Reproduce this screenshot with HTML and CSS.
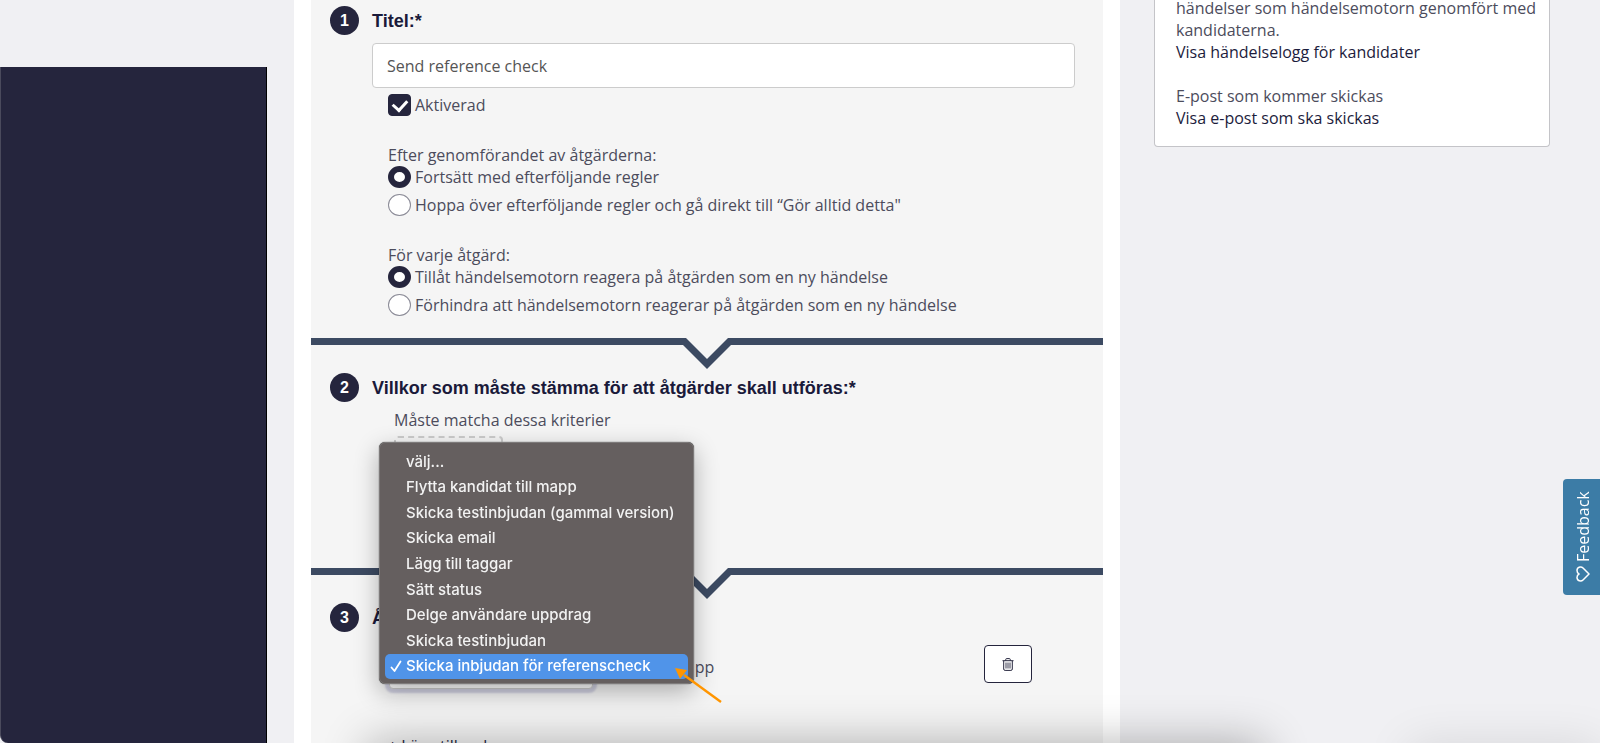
FILE: index.html
```html
<!DOCTYPE html>
<html lang="sv">
<head>
  <meta charset="utf-8">
  <title>Händelsemotor - Redigera regel</title>
  <meta name="viewport" content="width=device-width, initial-scale=1.0">
  <link rel="stylesheet" href="styles.css">
</head>
<body>
  <div class="page">
    <div class="sidebar"></div>

    <main class="main">
      <form class="rule">
        <section class="step step-first">
          <div class="step-header">
            <span class="step-number">1</span>
            <label class="step-title" for="title">Titel:*</label>
          </div>
          <input class="title-input" type="text" id="title" name="title" value="Send reference check">

          <div class="options">
            <label class="option"><input type="checkbox" name="active" checked> Aktiverad</label>
          </div>

          <div class="options" role="radiogroup" aria-labelledby="after-label">
            <div id="after-label">Efter genomförandet av åtgärderna:</div>
            <label class="option"><input type="radio" name="after" checked> Fortsätt med efterföljande regler</label>
            <label class="option"><input type="radio" name="after"> Hoppa över efterföljande regler och gå direkt till “Gör alltid detta"</label>
          </div>

          <div class="options" role="radiogroup" aria-labelledby="each-label">
            <div id="each-label">För varje åtgärd:</div>
            <label class="option"><input type="radio" name="each" checked> Tillåt händelsemotorn reagera på åtgärden som en ny händelse</label>
            <label class="option"><input type="radio" name="each"> Förhindra att händelsemotorn reagerar på åtgärden som en ny händelse</label>
          </div>
        </section>

        <div class="divider">
          <svg width="48" height="31" viewBox="0 0 48 31"><path d="M0 0H3L24 21L45 0H48V7L24 31L0 7Z" fill="#3c4a62"/></svg>
        </div>

        <section class="step step-conditions">
          <div class="step-header">
            <span class="step-number">2</span>
            <h2 class="step-title">Villkor som måste stämma för att åtgärder skall utföras:*</h2>
          </div>
          <div class="criteria">
            <div>Måste matcha dessa kriterier</div>
            <div class="criteria-box"></div>
          </div>
        </section>

        <div class="divider">
          <svg width="48" height="31" viewBox="0 0 48 31"><path d="M0 0H3L24 21L45 0H48V7L24 31L0 7Z" fill="#3c4a62"/></svg>
        </div>

        <section class="step">
          <div class="step-header">
            <span class="step-number">3</span>
            <h2 class="step-title">Åtgärder:*</h2>
          </div>
          <div class="action-row">
            <div class="action-field">
              <select class="action-select" name="action" aria-label="Åtgärd">
                <option></option>
              </select>

              <ul class="menu" role="listbox">
                <li class="menu-item" role="option">välj...</li>
                <li class="menu-item" role="option">Flytta kandidat till mapp</li>
                <li class="menu-item" role="option">Skicka testinbjudan (gammal version)</li>
                <li class="menu-item" role="option">Skicka email</li>
                <li class="menu-item" role="option">Lägg till taggar</li>
                <li class="menu-item" role="option">Sätt status</li>
                <li class="menu-item" role="option">Delge användare uppdrag</li>
                <li class="menu-item" role="option">Skicka testinbjudan</li>
                <li class="menu-item selected" role="option" aria-selected="true">
                  <svg class="check" width="12" height="13" viewBox="0 0 12 13"><path d="M1.500 7.500L4.500 11L10.500 1.500" fill="none" stroke="#fff" stroke-width="1.800" stroke-linecap="round" stroke-linejoin="round"/></svg>
                  Skicka inbjudan för referenscheck
                </li>
              </ul>

              <svg class="arrow" width="48" height="36" viewBox="0 0 48 36">
                <path d="M9 7L46 34" stroke="#ff9500" stroke-width="2.400"/>
                <path d="M0 0L12 2L5 11Z" fill="#ff9500"/>
              </svg>
            </div>
            <div class="action-target">mapp</div>
            <button class="delete-btn" type="button" aria-label="Ta bort">
              <svg width="12" height="13" viewBox="0 0 12 13" fill="none" stroke="#25253d">
                <path d="M0.500 2.700H11.500M3.700 2.500V1.600Q3.700 0.600 4.700 0.600H7.300Q8.300 0.600 8.300 1.600V2.500M1.700 3V11Q1.700 12.400 3.100 12.400H8.900Q10.300 12.400 10.300 11V3"/>
                <path d="M4 4.500V10.500M6 4.500V10.500M8 4.500V10.500" stroke-width="0.900"/>
              </svg>
            </button>
          </div>
          <button class="add-btn" type="button">+ Lägg till rad</button>
        </section>
      </form>
    </main>

    <aside class="info">
      <div class="info-card">
        <p>händelser som händelsemotorn genomfört med kandidaterna.<br>
        <a href="#">Visa händelselogg för kandidater</a></p>
        <p>E-post som kommer skickas<br>
        <a href="#">Visa e-post som ska skickas</a></p>
      </div>
    </aside>
  </div>

  <button class="feedback" type="button">
    <svg width="14" height="16" viewBox="0 0 14 16"><path d="M1 8L7 2C9 0 13 1 13 4.500C13 6.500 12 7.500 11 8C12 8.500 13 9.500 13 11.500C13 15 9 16 7 14Z" fill="none" stroke="#fff" stroke-width="1.500" stroke-linejoin="round"/></svg>
    Feedback
  </button>

  <div class="shade shade-left"></div>
  <div class="shade shade-right"></div>
</body>
</html>
```
FILE: styles.css
```css
* {
  box-sizing: border-box;
}

body {
  margin: 0;
  background-color: #f0f0f3;
  color: #4c4c5c;
  font-family: "Open Sans", sans-serif;
  font-size: 16px;
  line-height: 22px;
  overflow: hidden;
}

.page {
  display: flex;
  height: 100vh;
}

.sidebar {
  flex: 0 0 267px;
  margin-top: 67px;
  background-color: #25253d;
  border-left: 1px solid #4a4a5c;
  border-right: 1px solid #000;
  border-bottom-left-radius: 8px;
}

.main {
  flex: 1;
  margin-left: 27px;
  padding: 0 17px;
  background-color: #fff;
}

.rule {
  min-height: 100%;
  background-color: #f5f5f5;
}

/* steps */
.step {
  padding: 28px 28px 0 19px;
}

.step-first {
  padding-top: 6px;
  padding-bottom: 16px;
}

.step-conditions {
  padding-bottom: 92px;
}

.step-header {
  display: flex;
  align-items: center;
  gap: 13px;
}

.step-number {
  width: 29px;
  height: 29px;
  border-radius: 50%;
  background-color: #25253d;
  color: #fff;
  font: bold 16px/29px "Liberation Sans", Arial, sans-serif;
  text-align: center;
}

.step-title {
  margin: 0;
  color: #1a1a3a;
  font: bold 18px/22px "Liberation Sans", Arial, sans-serif;
}

.title-input {
  display: block;
  width: calc(100% - 42px);
  height: 45px;
  margin: 8px 0 6px 42px;
  padding: 0 14px;
  border: 1px solid #ccc;
  border-radius: 4px;
  background-color: #fff;
  color: #555;
  font: inherit;
}

.options {
  margin-left: 58px;
  padding-bottom: 22px;
}

.options:last-child {
  padding-bottom: 0;
}

.option {
  display: flex;
  align-items: center;
  gap: 4px;
  padding-bottom: 6px;
}

.option input {
  appearance: none;
  flex: none;
  width: 23px;
  height: 22px;
  margin: 0;
  border: 1px solid #8a8a96;
  border-radius: 50%;
  background-color: #fff;
}

.option input[type="radio"]:checked {
  border: 6px solid #25253d;
}

.option input[type="checkbox"] {
  display: grid;
  place-items: center;
  border-color: #25253d;
  border-radius: 4px;
  background-color: #25253d;
}

.option input[type="checkbox"]::before {
  content: "";
  width: 7px;
  height: 11px;
  margin-bottom: 3px;
  border: solid #fff;
  border-width: 0 3px 3px 0;
  transform: rotate(42deg);
}

/* line with the arrow between two steps */
.divider {
  display: flex;
  align-items: flex-start;
  height: 7px;
}

.divider::before,
.divider::after {
  content: "";
  flex: 1;
  height: 7px;
  background-color: #3c4a62;
}

.criteria {
  margin: 7px 0 0 64px;
}

.criteria-box {
  width: 109px;
  height: 40px;
  margin-top: 5px;
  border: 2px dashed #ccc;
  border-radius: 4px;
}

.action-row {
  display: flex;
  align-items: flex-start;
  margin: 13px 43px 0 59px;
}

.action-field {
  position: relative;
  padding-top: 6px;
}

.action-select {
  display: block;
  width: 204px;
  height: 38px;
  border: 1px solid #ccc;
  border-radius: 4px;
  background-color: #fff;
  box-shadow: 0 0 2px 4px #cfcfe0;
}

.action-target {
  margin: 11px 0 0 78px;
}

.delete-btn {
  display: flex;
  align-items: center;
  justify-content: center;
  width: 48px;
  height: 38px;
  margin-left: auto;
  border: 1px solid #25253d;
  border-radius: 4px;
  background-color: #fff;
}

.add-btn {
  margin: 46px 0 0 58px;
  padding: 0;
  border: none;
  background: none;
  color: #25253d;
  font: inherit;
}

/* open drop-down */
.menu {
  position: absolute;
  bottom: 5px;
  left: -10px;
  z-index: 1;
  display: flex;
  flex-direction: column;
  width: 315px;
  height: 242px;
  margin: 0;
  padding: 6px 5px 4px;
  border: 1px solid #7d7a7a;
  border-radius: 6px;
  background-color: #655f5f;
  box-shadow: 0 8px 24px rgba(0, 0, 0, 0.3), 0 0 1px #000;
  color: #f2f2f2;
  font-family: Inter, sans-serif;
  font-size: 15px;
  font-weight: 500;
  list-style: none;
}

.menu-item {
  position: relative;
  display: flex;
  flex: 1;
  align-items: center;
  padding-left: 21px;
  white-space: nowrap;
}

.menu-item.selected {
  border-radius: 5px;
  background-color: #5094e9;
  color: #fff;
}

.check {
  position: absolute;
  left: 5px;
}

.arrow {
  position: absolute;
  left: 286px;
  top: 23px;
  z-index: 2;
}

/* right column */
.info {
  flex: 0 0 396px;
  margin: -3px 50px 0 34px;
}

.info-card {
  padding: 0 10px 17px 21px;
  border: 1px solid #c4c4c8;
  border-top: none;
  border-radius: 0 0 4px 4px;
  background-color: #fff;
}

.info-card p {
  margin: 0 0 22px;
}

.info-card p:last-child {
  margin-bottom: 0;
}

.info-card a {
  color: #1c1c3c;
  text-decoration: none;
}

.feedback {
  position: fixed;
  top: 479px;
  right: 0;
  display: flex;
  align-items: center;
  justify-content: center;
  gap: 4px;
  width: 37px;
  height: 116px;
  padding: 0 3px 0 0;
  border: none;
  border-radius: 0 4px 4px 0;
  background-color: #3c7ca6;
  color: #fff;
  font: 16px/22px "Open Sans", sans-serif;
  writing-mode: vertical-rl;
  transform: rotate(180deg);
}

/* soft shadow along the bottom edge */
.shade {
  position: fixed;
  top: 100%;
  height: 60px;
  pointer-events: none;
}

.shade-left {
  left: 23%;
  right: 21%;
  box-shadow: 0 0 46px rgba(0, 0, 0, 0.3);
}

.shade-right {
  left: 88%;
  right: 0;
  box-shadow: 0 0 46px rgba(0, 0, 0, 0.1);
}
```
